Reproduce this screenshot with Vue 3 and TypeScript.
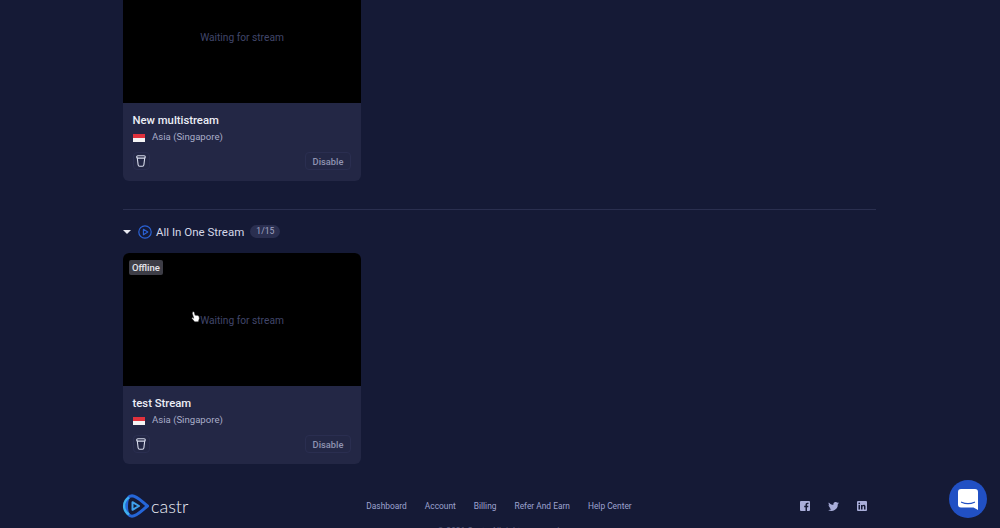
<script setup lang="ts">
interface Stream { name: string; offline: boolean }
const first: Stream = { name: 'New multistream', offline: false }
const second: Stream = { name: 'test Stream', offline: true }
const cards = { first, second }
const links = ['Dashboard', 'Account', 'Billing', 'Refer And Earn', 'Help Center']
</script>

<template>
  <div class="page">
    <main class="content">
      <article v-for="(s, key) in cards" :key="key" class="card">
        <template v-if="key === 'second'">
          <hr class="rule" />
          <div class="section-head">
            <span class="caret"></span>
            <svg class="play" width="14" height="14" viewBox="0 0 14 14" fill="none">
              <circle cx="7" cy="7" r="6.2" stroke="#2a62d6" stroke-width="1.2" />
              <path d="M5.4 4.2 9.800 7l-4.400 2.800z" stroke="#2a62d6" stroke-width="1.100" stroke-linejoin="round" />
            </svg>
            <span class="section-title">All In One Stream</span>
            <span class="count">1/15</span>
          </div>
        </template>
        <div class="box">
          <div class="video">
            <span v-if="s.offline" class="badge">Offline</span>
            <span class="waiting">Waiting for stream</span>
            <svg v-if="s.offline" class="cursor" width="10" height="13" viewBox="0 0 10 13">
              <path d="M1.800 .8c.7-.4 1.300 0 1.500.7l.8 3 .6-.4.800.3.700-.1.900.5.900.4.300 2.300-1 3.300H3.700L.8 7.300l.5-.8 1.500.8L1.300 2.200z" fill="#fff" stroke="#333" stroke-width=".5" />
            </svg>
          </div>
          <div class="info">
            <div class="name">{{ s.name }}</div>
            <div class="region">
              <svg class="flag" width="12" height="8" viewBox="0 0 12 8">
                <rect width="12" height="4" fill="#e0313c" />
                <rect y="4" width="12" height="4" fill="#f4f4f4" />
              </svg>
              <span>Asia (Singapore)</span>
            </div>
            <div class="actions">
              <button class="icon-btn" type="button" aria-label="Delete">
                <svg width="10" height="12" viewBox="0 0 10 12" fill="none">
                  <rect x=".7" y=".7" width="8.600" height="2.400" rx="1.200" stroke="#d8dcec" stroke-width="1.100" />
                  <path d="M1.300 3l.8 6.700c.1.900.6 1.500 1.500 1.500h2.800c.9 0 1.400-.6 1.500-1.500L8.700 3" stroke="#d8dcec" stroke-width="1.100" stroke-linecap="round" />
                </svg>
              </button>
              <button class="disable" type="button">Disable</button>
            </div>
          </div>
        </div>
      </article>
    </main>

    <footer class="footer">
      <div class="footer-row">
        <div class="logo">
          <svg width="27" height="24" viewBox="0 0 27 24" fill="none">
            <path d="M10 1.800c5 .2 10 6 15.500 10.200-5.500 4.200-10.500 10-15.500 10.200-3.500 0-5.500-4-5.500-10.200S6.500 1.800 10 1.800z" stroke="#2566d8" stroke-width="3" />
            <path d="M7 3.500C.5 7 .5 17 7 20.500" stroke="#3fb0ee" stroke-width="2.400" />
            <path d="M10.500 8.200 17 12l-6.500 3.800z" stroke="#3fa2ee" stroke-width="2" stroke-linejoin="round" />
          </svg>
          <span class="wordmark">castr</span>
        </div>
        <nav class="links">
          <a v-for="l in links" :key="l">{{ l }}</a>
        </nav>
        <div class="social">
          <svg width="10" height="10" viewBox="0 0 10 10">
            <path fill="#a9aeda" d="M1 0h8a1 1 0 0 1 1 1v8a1 1 0 0 1-1 1H7V6.200h1.200L8.400 4.700H7V3.900c0-.5.200-.8.800-.8h.700V1.800C8.300 1.800 7.900 1.700 7.400 1.700 6.200 1.700 5.500 2.500 5.500 3.700v1H4.200v1.500h1.300V10H1a1 1 0 0 1-1-1V1a1 1 0 0 1 1-1z" />
          </svg>
          <svg width="11" height="9" viewBox="0 0 24 20">
            <path fill="#a9aeda" d="M24 2.400c-.9.400-1.800.700-2.800.8 1-.6 1.800-1.600 2.200-2.700-1 .6-2 1-3.100 1.200A4.900 4.900 0 0 0 11.900 6.200C7.800 6 4.100 4 1.700.9c-1.300 2.200-.7 5.100 1.500 6.600-.8 0-1.600-.2-2.200-.6 0 2.300 1.600 4.500 4 5-.7.200-1.500.2-2.200.1.600 2 2.500 3.400 4.600 3.400A9.900 9.900 0 0 1 0 17.500 14 14 0 0 0 21.500 5c1-.7 1.800-1.600 2.500-2.600z" />
          </svg>
          <svg width="10" height="10" viewBox="0 0 10 10">
            <path fill="#a9aeda" fill-rule="evenodd" d="M1 0h8a1 1 0 0 1 1 1v8a1 1 0 0 1-1 1H1a1 1 0 0 1-1-1V1a1 1 0 0 1 1-1zM1.500 3.900V8.500H3V3.900zM2.250 1.500a.85.85 0 1 0 0 1.700.85.85 0 0 0 0-1.700zM4 3.900V8.500h1.500V6c0-1.300 1.500-1.300 1.500 0v2.500h1.500V5.600c0-2.200-2.400-2.200-3-1v-.7z" />
          </svg>
        </div>
      </div>
      <p class="copy">© 2021 Castr. All rights reserved.</p>
    </footer>

    <button class="chat" type="button" aria-label="Chat">
      <svg width="20" height="21" viewBox="0 0 20 21">
        <path fill="#fff" d="M3 0h14a3 3 0 0 1 3 3v18l-4.500-2.600H3a3 3 0 0 1-3-3V3a3 3 0 0 1 3-3z" />
        <path d="M3.500 13.200c4 1.800 9 1.800 13 0" stroke="#2150c4" stroke-width="1.200" fill="none" stroke-linecap="round" />
      </svg>
    </button>
  </div>
</template>

<style>
html, body { margin: 0; background: #151a36; overflow: hidden; }
</style>

<style scoped>
.page {
  position: relative;
  width: 1000px;
  height: 528px;
  overflow: hidden;
  background: #151a36;
  font-family: "Roboto", "Noto Sans", sans-serif;
}
.content { padding: 0 124px 0 123px; margin-top: -30px; }
.box { width: 238px; border-radius: 6px; overflow: hidden; background: #232745; }
.video {
  position: relative;
  height: 133px;
  background: #000;
  display: flex;
  align-items: center;
  justify-content: center;
}
.waiting { font-size: 10.200px; color: #41466a; padding-top: 1px; }
.badge {
  position: absolute;
  left: 6px;
  top: 7px;
  background: #3d3d46;
  color: #e4e4ea;
  font-size: 9.500px;
  font-weight: 500;
  line-height: 15px;
  padding: 0 3px;
  border-radius: 2px;
}
.cursor { position: absolute; left: 68px; top: 58px; }
.info { padding: 10.500px 10px 9px 9.500px; height: 78px; box-sizing: border-box; }
.name { font-size: 11.300px; font-weight: 500; color: #eceef6; line-height: 14px; }
.region {
  display: flex;
  align-items: center;
  gap: 7.500px;
  margin-top: 2px;
  font-size: 9.600px;
  line-height: 14px;
  color: #a9adc8;
}
.flag { flex: none; margin-top: 2px; }
.actions { display: flex; justify-content: space-between; align-items: center; margin-top: 8.500px; }
.icon-btn, .disable {
  background: transparent;
  border: 1px solid #2a2e50;
  border-radius: 4px;
  height: 18px;
  padding: 0;
  display: flex;
  align-items: center;
  justify-content: center;
  font-family: inherit;
}
.icon-btn { width: 17px; }
.disable { width: 46px; font-size: 9.300px; font-weight: 500; color: #8f93b2; }
.rule { border: 0; border-top: 1px solid #2a2f4f; margin: 28px 0 0; width: 753px; }
.section-head { display: flex; align-items: center; height: 43px; }
.caret {
  width: 0;
  height: 0;
  border-left: 4px solid transparent;
  border-right: 4px solid transparent;
  border-top: 4px solid #e8e9f2;
  margin-right: 7px;
}
.play { margin-right: 5px; margin-top: 1px; }
.section-title { font-size: 11.500px; color: #d4d7e8; margin-left: -1px; }
.count {
  margin-left: 6px;
  background: #2a2f50;
  color: #a2a6c4;
  font-size: 8.600px;
  line-height: 13px;
  padding: 0 6px;
  border-radius: 7px;
}
.footer { padding: 0 124px 0 123px; margin-top: 29px; }
.footer-row { display: flex; align-items: center; justify-content: space-between; height: 26px; width: 753px; }
.logo { display: flex; align-items: center; gap: 2px; width: 230px; margin-left: -1px; }
.wordmark {
  font-family: "Lato", "Noto Sans", sans-serif;
  font-size: 18px;
  font-weight: 300;
  line-height: 20px;
  color: #eef0f8;
}
.links { display: flex; gap: 18px; font-size: 8.400px; color: #9da3d0; white-space: nowrap; flex: none; }
.social { display: flex; align-items: center; gap: 18px; width: 230px; justify-content: flex-end; padding-right: 9px; box-sizing: border-box; }
.copy { margin: 7px 0 0; text-align: center; font-size: 8.500px; color: #5c6080; width: 753px; white-space: nowrap; }
.chat {
  position: absolute;
  left: 949px;
  top: 480px;
  width: 38px;
  height: 38px;
  border: 0;
  padding: 0;
  border-radius: 50%;
  background: #2150c4;
  display: flex;
  align-items: center;
  justify-content: center;
}
</style>
